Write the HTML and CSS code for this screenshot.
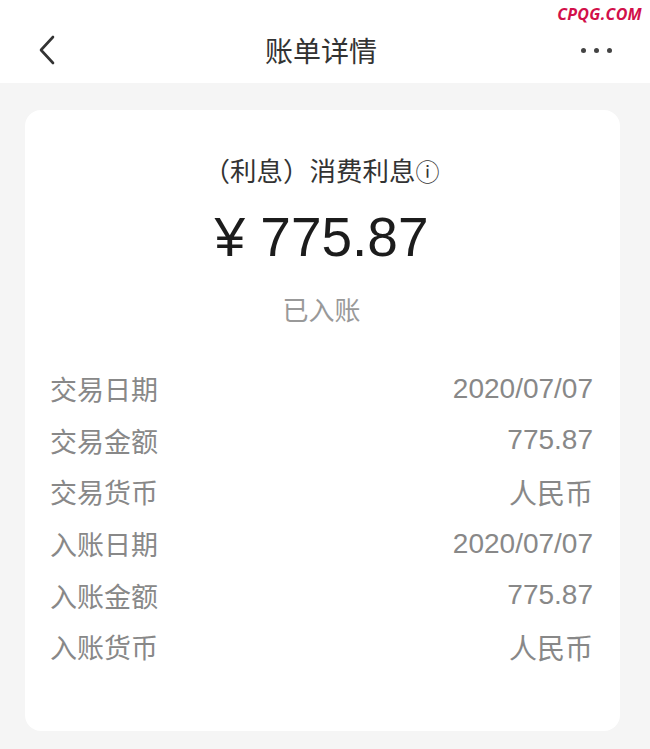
FILE: index.html
```html
<!DOCTYPE html>
<html lang="zh-CN">
<head>
    <meta charset="UTF-8">
    <meta name="viewport" content="width=device-width, initial-scale=1.0">
    <title>账单详情</title>
    <link rel="stylesheet" href="styles.css">
</head>
<body>
    <div class="watermark">CPQG.COM</div>

    <div class="nav-bar">
        <span class="nav-back">
            <svg width="18" height="30" viewBox="0 0 18 30">
                <path d="M15 2 L3 15 L15 28" fill="none" stroke="#333" stroke-width="2.6" stroke-linecap="round" stroke-linejoin="round"/>
            </svg>
        </span>
        <h1 class="nav-title">账单详情</h1>
        <span class="nav-more">
            <i></i><i></i><i></i>
        </span>
    </div>

    <div class="page">
        <div class="bill-card">
            <div class="bill-head">
                <div class="bill-type">（利息）消费利息<span class="info-mark">ⓘ</span></div>
                <div class="bill-amount">¥ 775.87</div>
                <div class="bill-status">已入账</div>
            </div>

            <div class="bill-rows">
                <div class="bill-row"><span class="label">交易日期</span><span class="value">2020/07/07</span></div>
                <div class="bill-row"><span class="label">交易金额</span><span class="value">775.87</span></div>
                <div class="bill-row"><span class="label">交易货币</span><span class="value">人民币</span></div>
                <div class="bill-row"><span class="label">入账日期</span><span class="value">2020/07/07</span></div>
                <div class="bill-row"><span class="label">入账金额</span><span class="value">775.87</span></div>
                <div class="bill-row"><span class="label">入账货币</span><span class="value">人民币</span></div>
            </div>
        </div>
    </div>
</body>
</html>
```

FILE: styles.css
```css
* {
    box-sizing: border-box;
}
html, body {
    margin: 0;
    padding: 0;
}
body {
    font-family: "Liberation Sans", "Noto Sans CJK SC", sans-serif;
    background-color: #f5f5f5;
    color: #333;
    min-height: 749px;
}
.watermark {
    position: absolute;
    top: 3px;
    right: 8px;
    font-family: "Open Sans", "Liberation Sans", sans-serif;
    font-size: 16px;
    font-weight: bold;
    font-style: italic;
    color: #d2104a;
    letter-spacing: 0.3px;
}
.nav-bar {
    height: 83px;
    padding: 17px 30px 0 38px;
    background-color: #fff;
    display: flex;
    align-items: center;
    justify-content: space-between;
}
.nav-back {
    width: 60px;
    display: flex;
    align-items: center;
}
.nav-title {
    margin: 0;
    font-size: 28px;
    font-weight: normal;
    color: #333;
}
.nav-more {
    width: 76px;
    display: flex;
    justify-content: flex-end;
    gap: 8px;
    padding-right: 8px;
}
.nav-more i {
    width: 5px;
    height: 5px;
    border-radius: 50%;
    background-color: #444;
}
.page {
    padding: 27px 30px 17px 25px;
}
.bill-card {
    background-color: #fff;
    border-radius: 16px;
    padding: 44px 27px 58px 25px;
}
.bill-head {
    text-align: center;
}
.bill-type {
    font-size: 26.5px;
    line-height: 36px;
    color: #333;
}
.info-mark {
    font-size: 24px;
}
.bill-amount {
    margin-top: 14px;
    font-size: 55px;
    line-height: 64px;
    color: #1c1c1c;
}
.bill-status {
    margin-top: 24px;
    font-size: 26px;
    line-height: 36px;
    color: #999;
}
.bill-rows {
    margin-top: 34px;
}
.bill-row {
    height: 51.6px;
    display: flex;
    align-items: center;
    justify-content: space-between;
    color: #888;
}
.label {
    font-size: 27px;
}
.value {
    font-size: 28px;
}
```
